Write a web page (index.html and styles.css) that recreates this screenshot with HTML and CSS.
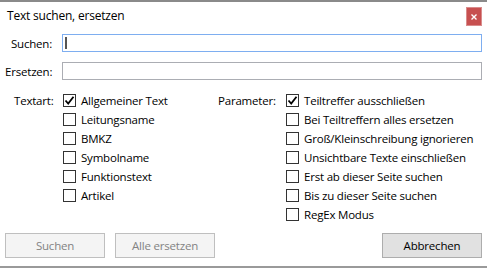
FILE: index.html
```html
<!DOCTYPE html>
<html lang="de">
<head>
<meta charset="utf-8">
<title>Text suchen, ersetzen</title>
<link rel="stylesheet" href="styles.css">
</head>
<body>
<div class="dialog">
  <div class="titlebar">
    <span class="title">Text suchen, ersetzen</span>
    <span class="close"><svg width="6" height="6" viewBox="0 0 6 6"><path d="M0.5 0.5 L5.5 5.5 M5.5 0.5 L0.5 5.5" stroke="#fff" stroke-width="1.4"/></svg></span>
  </div>
  <div class="form">
    <label class="flabel">Suchen:</label>
    <div class="input focus"><span class="caret"></span></div>
    <label class="flabel">Ersetzen:</label>
    <div class="input"></div>
  </div>
  <div class="options">
    <div class="group textart">
      <div class="glabel">Textart:</div>
      <ul class="checks">
        <li><span class="box checked"><svg width="11" height="11" viewBox="0 0 11 11"><path d="M1.5 5.5 L4.2 8.5 L9.5 1.8" fill="none" stroke="#000" stroke-width="1.8"/></svg></span>Allgemeiner Text</li>
        <li><span class="box"></span>Leitungsname</li>
        <li><span class="box"></span>BMKZ</li>
        <li><span class="box"></span>Symbolname</li>
        <li><span class="box"></span>Funktionstext</li>
        <li><span class="box"></span>Artikel</li>
      </ul>
    </div>
    <div class="group param">
      <div class="glabel">Parameter:</div>
      <ul class="checks">
        <li><span class="box checked"><svg width="11" height="11" viewBox="0 0 11 11"><path d="M1.5 5.5 L4.2 8.5 L9.5 1.8" fill="none" stroke="#000" stroke-width="1.8"/></svg></span>Teiltreffer ausschließen</li>
        <li><span class="box"></span>Bei Teiltreffern alles ersetzen</li>
        <li><span class="box"></span>Groß/Kleinschreibung ignorieren</li>
        <li><span class="box"></span>Unsichtbare Texte einschließen</li>
        <li><span class="box"></span>Erst ab dieser Seite suchen</li>
        <li><span class="box"></span>Bis zu dieser Seite suchen</li>
        <li><span class="box"></span>RegEx Modus</li>
      </ul>
    </div>
  </div>
  <div class="buttons">
    <button class="btn disabled">Suchen</button>
    <button class="btn disabled">Alle ersetzen</button>
    <span class="spacer"></span>
    <button class="btn primary">Abbrechen</button>
  </div>
</div>
</body>
</html>
```
FILE: styles.css
```css
html, body {
  margin: 0;
  padding: 0;
  background: #fff;
}
.dialog {
  width: 487px;
  height: 269px;
  box-sizing: border-box;
  border-top: 2px solid #8a8a8a;
  font-family: "Open Sans", "Noto Sans", sans-serif;
  font-size: 11.5px;
  letter-spacing: -0.2px;
  color: #000;
  display: flex;
  flex-direction: column;
  position: relative;
}
.titlebar {
  height: 32px;
  display: flex;
  align-items: flex-start;
  padding: 0 5px 0 7px;
}
.title {
  margin-top: 5px;
  font-size: 12px;
}
.close {
  margin-left: auto;
  margin-top: 5px;
  width: 16px;
  height: 19px;
  background: #c75050;
  border: 1px solid #d98c8c;
  box-sizing: border-box;
  display: flex;
  align-items: center;
  justify-content: center;
}
.close svg { display: block; }
.form {
  display: grid;
  grid-template-columns: 47px 1fr;
  column-gap: 10px;
  row-gap: 10px;
  padding: 0 5px;
  align-items: center;
}
.flabel {
  text-align: right;
  white-space: nowrap;
}
.input {
  height: 18px;
  box-sizing: border-box;
  border: 1px solid #abadb3;
  background: #fff;
  position: relative;
}
.input.focus {
  border-color: #7eaef0;
}
.caret {
  position: absolute;
  left: 2px;
  top: 2px;
  width: 2px;
  height: 12px;
  background: #555;
}
.options {
  display: flex;
  margin-top: 11px;
  height: 133px;
}
.group {
  display: flex;
  align-items: flex-start;
}
.textart {
  padding-left: 14px;
  width: 204px;
}
.textart .glabel { width: 49px; }
.param .glabel { width: 68px; }
.checks {
  list-style: none;
  margin: 0;
  padding: 0;
}
.checks li {
  height: 19px;
  display: flex;
  align-items: center;
  white-space: nowrap;
}
.glabel {
  height: 19px;
  line-height: 19px;
}
.box {
  width: 13px;
  height: 13px;
  box-sizing: border-box;
  border: 1px solid #333;
  margin-right: 5px;
  display: flex;
  align-items: center;
  justify-content: center;
  background: #fff;
}
.box svg { display: block; }
.buttons {
  display: flex;
  gap: 10px;
  padding: 0 5px;
  margin-top: auto;
  margin-bottom: 11px;
}
.spacer { flex: 1; }
.btn {
  width: 100px;
  height: 25px;
  box-sizing: border-box;
  font-family: "Open Sans", "Noto Sans", sans-serif;
  font-size: 11.5px;
  letter-spacing: -0.2px;
  padding: 0;
  border: 1px solid #bfbfbf;
  background: #f4f4f4;
  color: #838383;
}
.btn.primary {
  border-color: #adadad;
  background: #e1e1e1;
  color: #000;
}
.dialog::after {
  content: "";
  position: absolute;
  left: 0;
  right: 0;
  bottom: 1px;
  height: 2px;
  background: #9a9a9a;
}
```
